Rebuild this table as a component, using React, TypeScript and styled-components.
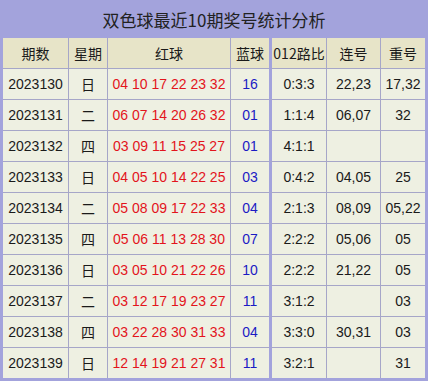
import React from 'react';
import styled, { createGlobalStyle } from 'styled-components';

const GlobalStyle = createGlobalStyle`
    body {
        margin: 0;
        background: #ffffff;
        font-family: 'Liberation Sans', Arial, 'Noto Sans CJK SC', sans-serif;
    }
`;

interface Draw {
    issue: string;
    week: string;
    reds: string;
    blue: string;
    ratio: string;
    consecutive: string;
    repeat: string;
}

const draws: Draw[] = [
    { issue: '2023130', week: '日', reds: '04 10 17 22 23 32', blue: '16', ratio: '0:3:3', consecutive: '22,23', repeat: '17,32' },
    { issue: '2023131', week: '二', reds: '06 07 14 20 26 32', blue: '01', ratio: '1:1:4', consecutive: '06,07', repeat: '32' },
    { issue: '2023132', week: '四', reds: '03 09 11 15 25 27', blue: '01', ratio: '4:1:1', consecutive: '', repeat: '' },
    { issue: '2023133', week: '日', reds: '04 05 10 14 22 25', blue: '03', ratio: '0:4:2', consecutive: '04,05', repeat: '25' },
    { issue: '2023134', week: '二', reds: '05 08 09 17 22 33', blue: '04', ratio: '2:1:3', consecutive: '08,09', repeat: '05,22' },
    { issue: '2023135', week: '四', reds: '05 06 11 13 28 30', blue: '07', ratio: '2:2:2', consecutive: '05,06', repeat: '05' },
    { issue: '2023136', week: '日', reds: '03 05 10 21 22 26', blue: '10', ratio: '2:2:2', consecutive: '21,22', repeat: '05' },
    { issue: '2023137', week: '二', reds: '03 12 17 19 23 27', blue: '11', ratio: '3:1:2', consecutive: '', repeat: '03' },
    { issue: '2023138', week: '四', reds: '03 22 28 30 31 33', blue: '04', ratio: '3:3:0', consecutive: '30,31', repeat: '03' },
    { issue: '2023139', week: '日', reds: '12 14 19 21 27 31', blue: '11', ratio: '3:2:1', consecutive: '', repeat: '31' },
];

const LAVENDER = '#a3a3dc';
const LINE = '#a6a6c8';

type Divider = 'none' | 'thin' | 'thick';
const dividers: Divider[] = ['none', 'thin', 'thin', 'thin', 'thick', 'thin', 'thin'];

const Wrapper = styled.div`
    width: 428px;
    border: 3px solid ${LAVENDER};
    border-top: none;
    box-sizing: border-box;
    background: ${LAVENDER};
`;

const Title = styled.div`
    height: 38px;
    display: flex;
    align-items: center;
    justify-content: center;
    font-size: 17px;
    color: #222;
    font-family: 'Noto Sans CJK SC', 'Liberation Sans', sans-serif;
`;

const Grid = styled.div`
    display: grid;
    grid-template-columns: 65px 39px 123px 39px 57px 54px 45px;
    background: #eef0e2;
`;

const Cell = styled.div<{ $divider: Divider; $tone?: 'red' | 'blue'; $head?: boolean }>`
    box-sizing: border-box;
    height: ${p => (p.$head ? '30px' : '31px')};
    display: flex;
    align-items: center;
    justify-content: center;
    white-space: nowrap;
    font-size: 14px;
    font-family: ${p =>
        p.$head ? "'Noto Sans CJK SC', 'Liberation Sans', sans-serif" : "'Liberation Sans', 'Noto Sans CJK SC', sans-serif"};
    color: ${p => (p.$tone === 'red' ? '#e3141c' : p.$tone === 'blue' ? '#1b1bc4' : '#1a1a1a')};
    background: ${p => (p.$head ? '#e7e4c8' : 'transparent')};
    border-top: ${p => (p.$head ? 'none' : `1px solid ${LINE}`)};
    border-left: ${p =>
        p.$divider === 'thick' ? `3px solid ${LAVENDER}` : p.$divider === 'thin' ? `1px solid ${LINE}` : 'none'};
`;

const headers = ['期数', '星期', '红球', '蓝球', '012路比', '连号', '重号'];

export default function App() {
    return (
        <>
            <GlobalStyle />
            <Wrapper>
                <Title>双色球最近10期奖号统计分析</Title>
                <Grid>
                    {headers.map((h, i) => (
                        <Cell key={h} $head $divider={dividers[i]}>
                            {h}
                        </Cell>
                    ))}
                    {draws.map(d => (
                        <React.Fragment key={d.issue}>
                            <Cell $divider={dividers[0]}>{d.issue}</Cell>
                            <Cell $divider={dividers[1]}>{d.week}</Cell>
                            <Cell $divider={dividers[2]} $tone="red">{d.reds}</Cell>
                            <Cell $divider={dividers[3]} $tone="blue">{d.blue}</Cell>
                            <Cell $divider={dividers[4]}>{d.ratio}</Cell>
                            <Cell $divider={dividers[5]}>{d.consecutive}</Cell>
                            <Cell $divider={dividers[6]}>{d.repeat}</Cell>
                        </React.Fragment>
                    ))}
                </Grid>
            </Wrapper>
        </>
    );
}
